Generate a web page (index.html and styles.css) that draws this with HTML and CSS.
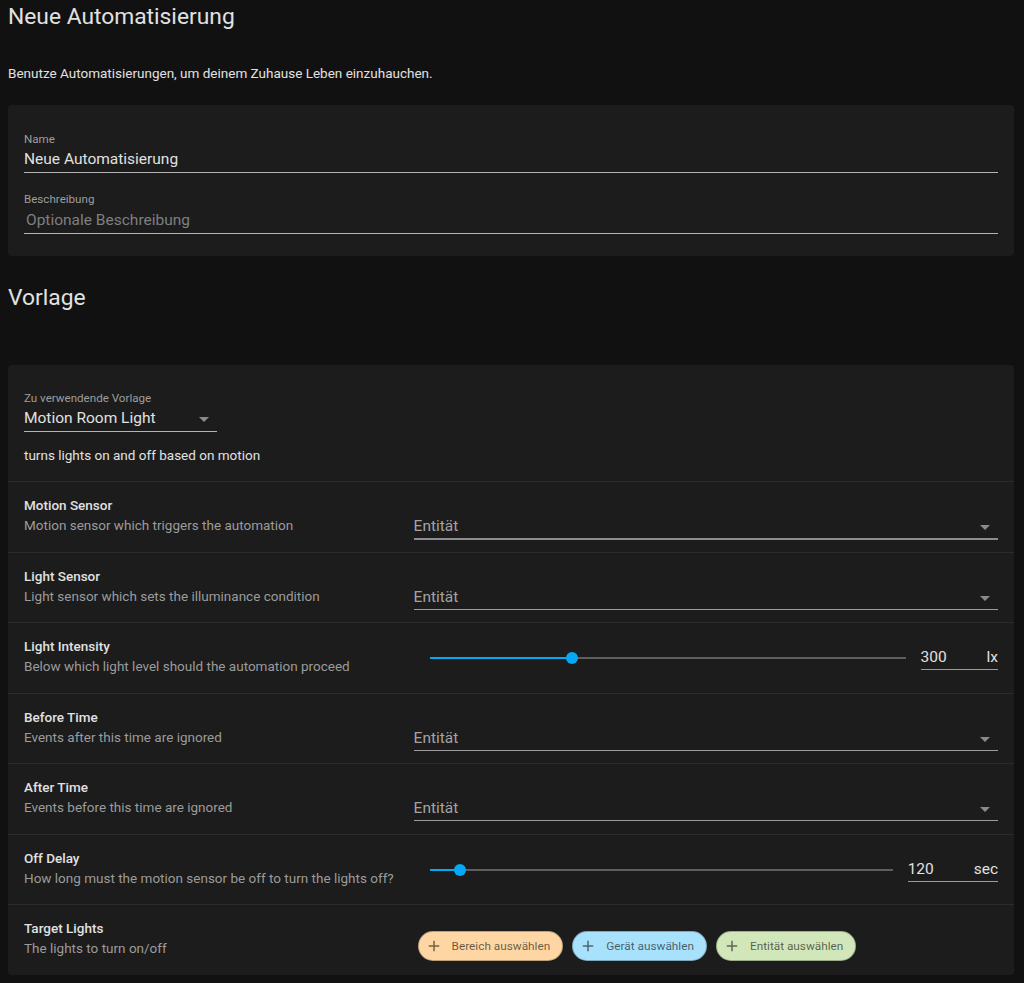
FILE: index.html
```html
<!DOCTYPE html>
<html lang="de">
<head>
  <meta charset="UTF-8" />
  <title>Neue Automatisierung</title>
  <meta name="viewport" content="width=device-width, initial-scale=1" />
  <link rel="stylesheet" href="styles.css">
</head>
<body>

  <div id="page">
    <h1 class="title">Neue Automatisierung</h1>
    <p class="intro">Benutze Automatisierungen, um deinem Zuhause Leben einzuhauchen.</p>

    <div class="card card-info">
      <div class="field">
        <div class="field-label">Name</div>
        <div class="field-value">Neue Automatisierung</div>
      </div>
      <div class="field field-gap">
        <div class="field-label">Beschreibung</div>
        <div class="field-value placeholder">Optionale Beschreibung</div>
      </div>
    </div>

    <h1 class="title section-title">Vorlage</h1>

    <div class="card card-blueprint">
      <div class="blueprint-head">
        <div class="field select-field">
          <div class="field-label">Zu verwendende Vorlage</div>
          <div class="field-value">Motion Room Light<span class="arrow"></span></div>
        </div>
        <div class="blueprint-desc">turns lights on and off based on motion</div>
      </div>

      <div class="row">
        <div class="row-text">
          <div class="row-title">Motion Sensor</div>
          <div class="row-desc">Motion sensor which triggers the automation</div>
        </div>
        <div class="row-input">
          <div class="entity-select thick">Entität<span class="arrow"></span></div>
        </div>
      </div>

      <div class="row">
        <div class="row-text">
          <div class="row-title">Light Sensor</div>
          <div class="row-desc">Light sensor which sets the illuminance condition</div>
        </div>
        <div class="row-input">
          <div class="entity-select">Entität<span class="arrow"></span></div>
        </div>
      </div>

      <div class="row">
        <div class="row-text">
          <div class="row-title">Light Intensity</div>
          <div class="row-desc">Below which light level should the automation proceed</div>
        </div>
        <div class="row-input slider-input">
          <div class="slider">
            <div class="track"><div class="track-fill" style="width: 30%"></div><div class="thumb" style="left: 30%"></div></div>
          </div>
          <div class="number-field"><span class="number">300</span><span class="unit">lx</span></div>
        </div>
      </div>

      <div class="row">
        <div class="row-text">
          <div class="row-title">Before Time</div>
          <div class="row-desc">Events after this time are ignored</div>
        </div>
        <div class="row-input">
          <div class="entity-select">Entität<span class="arrow"></span></div>
        </div>
      </div>

      <div class="row">
        <div class="row-text">
          <div class="row-title">After Time</div>
          <div class="row-desc">Events before this time are ignored</div>
        </div>
        <div class="row-input">
          <div class="entity-select">Entität<span class="arrow"></span></div>
        </div>
      </div>

      <div class="row">
        <div class="row-text">
          <div class="row-title">Off Delay</div>
          <div class="row-desc">How long must the motion sensor be off to turn the lights off?</div>
        </div>
        <div class="row-input slider-input">
          <div class="slider">
            <div class="track"><div class="track-fill" style="width: 6.5%"></div><div class="thumb" style="left: 6.5%"></div></div>
          </div>
          <div class="number-field"><span class="number">120</span><span class="unit">sec</span></div>
        </div>
      </div>

      <div class="row last">
        <div class="row-text">
          <div class="row-title">Target Lights</div>
          <div class="row-desc">The lights to turn on/off</div>
        </div>
        <div class="row-input chips">
          <div class="chip chip-area"><svg viewBox="0 0 24 24"><path d="M19 13h-6v6h-2v-6H5v-2h6V5h2v6h6v2z"/></svg>Bereich auswählen</div>
          <div class="chip chip-device"><svg viewBox="0 0 24 24"><path d="M19 13h-6v6h-2v-6H5v-2h6V5h2v6h6v2z"/></svg>Gerät auswählen</div>
          <div class="chip chip-entity"><svg viewBox="0 0 24 24"><path d="M19 13h-6v6h-2v-6H5v-2h6V5h2v6h6v2z"/></svg>Entität auswählen</div>
        </div>
      </div>
    </div>
  </div>

</body>
</html>
```

FILE: styles.css
```css
html, body {
  margin: 0;
  background: #111111;
  color: #e1e1e1;
  font-family: Roboto, 'Noto Sans', sans-serif;
}
#page {
  padding: 0 10px 0 8px;
}
.title {
  margin: 0;
  padding-top: 1px;
  font-size: 22.8px;
  line-height: 32px;
  font-weight: 400;
  color: #e1e1e1;
}
.intro {
  margin: 30px 0 22px;
  font-size: 13.5px;
  line-height: 20px;
}
.card {
  background: #1c1c1c;
  border-radius: 4px;
}
.card-info {
  padding: 26px 16px 22px;
}
.field-label {
  font-size: 11.6px;
  line-height: 16px;
  color: #9e9e9e;
}
.field-value {
  position: relative;
  font-size: 15.5px;
  line-height: 24px;
  padding-bottom: 1px;
  color: #e1e1e1;
  border-bottom: 1px solid #b4b4b4;
}
.field-value.placeholder {
  color: #7f7f7f;
  padding-left: 2px;
  margin-top: 1px;
}
.field-gap {
  margin-top: 18px;
}
.section-title {
  margin-top: 25px;
  margin-bottom: 51px;
}
.card-blueprint {
  padding-top: 25px;
}
.blueprint-head {
  padding: 0 16px 16px;
  border-bottom: 1px solid #2b2b2b;
}
.select-field {
  width: 193px;
}
.arrow {
  position: absolute;
  right: 8px;
  top: 11px;
  width: 0;
  height: 0;
  border-left: 5px solid transparent;
  border-right: 5px solid transparent;
  border-top: 5px solid #8a8a8a;
}
.blueprint-desc {
  margin-top: 13px;
  font-size: 13.5px;
  line-height: 20px;
}
.row {
  display: flex;
  box-sizing: border-box;
  height: 70.5px;
  padding: 13px 16px 0;
  border-bottom: 1px solid #2b2b2b;
}
.row.last {
  border-bottom: none;
  height: 70px;
}
.row-text {
  flex: 0 0 40%;
}
.row-title {
  font-size: 13.5px;
  line-height: 20px;
  font-weight: 500;
  color: #e1e1e1;
}
.row-desc {
  font-size: 13.5px;
  line-height: 20px;
  color: #9b9b9b;
}
.row-input {
  flex: 1;
  display: flex;
}
.entity-select {
  position: relative;
  flex: 1;
  margin-top: 19px;
  height: 24px;
  font-size: 15.5px;
  line-height: 24px;
  color: #a3a3a3;
  border-bottom: 1px solid #9a9a9a;
}
.entity-select.thick {
  border-bottom: 2px solid #8c8c8c;
}
.entity-select .arrow {
  right: 8px;
}
.slider-input {
  align-self: flex-start;
  align-items: center;
  margin-top: 9px;
}
.slider {
  flex: 1;
  margin: 1px 15px 0 16px;
}
.track {
  position: relative;
  height: 2px;
  background: #5e5e5e;
}
.track-fill {
  height: 2px;
  background: #03a9f4;
}
.thumb {
  position: absolute;
  top: -5px;
  width: 12px;
  height: 12px;
  margin-left: -6px;
  border-radius: 50%;
  background: #03a9f4;
}
.number-field {
  display: flex;
  justify-content: space-between;
  font-size: 15.5px;
  line-height: 24px;
  border-bottom: 1px solid #9a9a9a;
}
.number {
  width: 56px;
  color: #e1e1e1;
}
.unit {
  padding-left: 10px;
  color: #e1e1e1;
}
.chips {
  align-items: flex-start;
  gap: 9px;
  padding: 13px 0 0 4px;
}
.chip {
  display: flex;
  align-items: center;
  box-sizing: border-box;
  height: 30px;
  padding: 0 12px 0 6px;
  border-radius: 15px;
  border: 1px solid rgba(0, 0, 0, 0.25);
  font-size: 11.8px;
  color: rgba(0, 0, 0, 0.6);
}
.chip svg {
  width: 18px;
  height: 18px;
  margin-right: 9px;
  fill: rgba(0, 0, 0, 0.55);
}
.chip-area {
  background: #fed6a4;
}
.chip-device {
  background: #a8e1fb;
}
.chip-entity {
  background: #d2e7b9;
}
```
